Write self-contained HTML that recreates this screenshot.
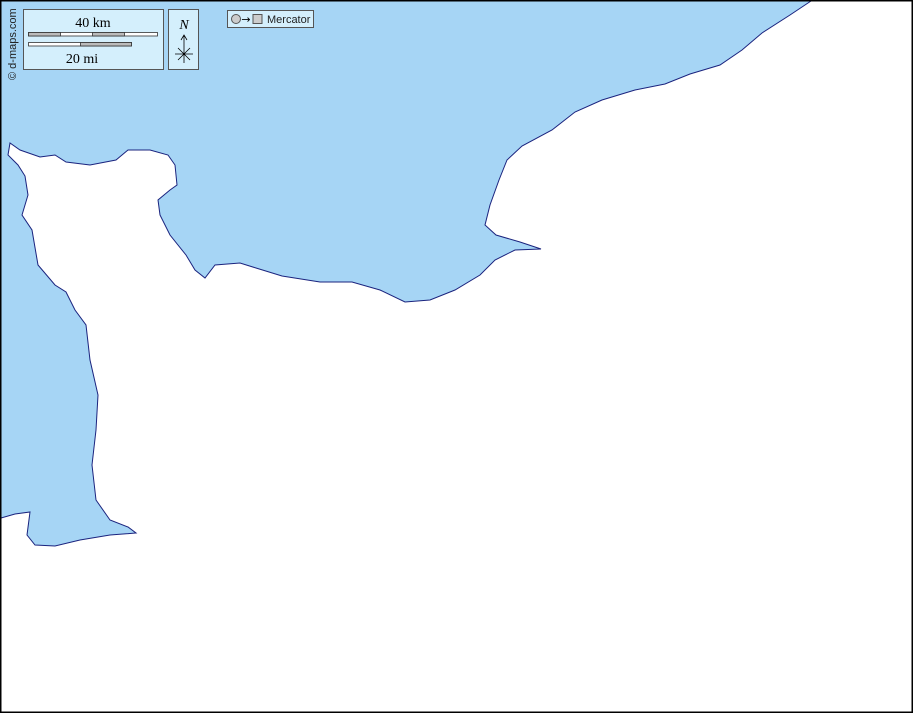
<!DOCTYPE html>
<html><head><meta charset="utf-8"><style>
html,body{margin:0;padding:0;width:913px;height:713px;overflow:hidden;background:#fff}
svg{display:block}
</style></head><body>
<svg width="913" height="713" viewBox="0 0 913 713" xmlns="http://www.w3.org/2000/svg">
<rect x="0" y="0" width="913" height="713" fill="#a6d5f5"/>
<path fill="#fff" stroke="#1a237e" stroke-width="1" d="M811,1 L790,15 L762,33 L742,50 L720,65 L690,74 L665,84 L635,90 L602,100 L575,112 L552,130 L522,146 L507,160 L499,180 L490,205 L485,225 L496,235 L520,242 L541,249 L515,250 L495,260 L480,275 L455,290 L430,300 L405,302 L380,290 L352,282 L320,282 L282,276 L256,268 L240,263 L215,265 L205,278 L195,270 L186,255 L170,235 L160,215 L158,200 L170,190 L177,185 L175,165 L168,155 L150,150 L128,150 L116,160 L90,165 L66,162 L55,155 L40,157 L20,150 L10,143 L8,155 L18,165 L25,176 L28,195 L22,215 L32,230 L38,265 L55,285 L66,292 L75,310 L86,325 L90,360 L98,395 L96,430 L92,465 L96,500 L110,520 L128,527 L136,533 L110,535 L80,540 L55,546 L35,545 L27,535 L30,512 L15,514 L1,518 L1,712 L912,712 L912,1 Z"/>
<rect x="0.5" y="0.5" width="912" height="712" fill="none" stroke="#000" stroke-width="2"/>
<rect x="23.5" y="9.5" width="140" height="60" fill="#d4effc" stroke="#555"/>
<text x="93" y="27" font-family="Liberation Serif,serif" font-size="14" text-anchor="middle">40 km</text>
<rect x="28.5" y="32.5" width="129" height="3.5" fill="#fff" stroke="#333" stroke-width="0.8"/>
<rect x="28.5" y="32.5" width="32" height="3.5" fill="#bbb" stroke="#333" stroke-width="0.8"/>
<rect x="92.5" y="32.5" width="32" height="3.5" fill="#bbb" stroke="#333" stroke-width="0.8"/>
<rect x="28.5" y="42.5" width="103" height="3.5" fill="#fff" stroke="#333" stroke-width="0.8"/>
<rect x="80.5" y="42.5" width="51" height="3.5" fill="#bbb" stroke="#333" stroke-width="0.8"/>
<text x="82" y="63" font-family="Liberation Serif,serif" font-size="14" text-anchor="middle">20 mi</text>
<rect x="168.5" y="9.5" width="30" height="60" fill="#d4effc" stroke="#555"/>
<text x="184" y="29" font-family="Liberation Serif,serif" font-size="14" font-style="italic" text-anchor="middle">N</text>
<path d="M184,35 V63 M181,40 L184,35 L187,40 M175,54 H193 M178,48 L190,60 M190,48 L178,60" stroke="#000" stroke-width="0.8" fill="none"/>
<rect x="227.5" y="10.5" width="86" height="17" fill="#d4effc" stroke="#555"/>
<circle cx="236" cy="19" r="4.5" fill="#ccc" stroke="#555"/>
<text x="246" y="23" font-family="DejaVu Sans,sans-serif" font-size="11" text-anchor="middle">→</text>
<rect x="253" y="14.5" width="9" height="9" fill="#ccc" stroke="#555"/>
<text x="267" y="23" font-family="Liberation Sans,sans-serif" font-size="11" fill="#222">Mercator</text>
<text transform="translate(16,80) rotate(-90)" font-family="Liberation Sans,sans-serif" font-size="11" fill="#222">© d-maps.com</text>
</svg>
</body></html>
